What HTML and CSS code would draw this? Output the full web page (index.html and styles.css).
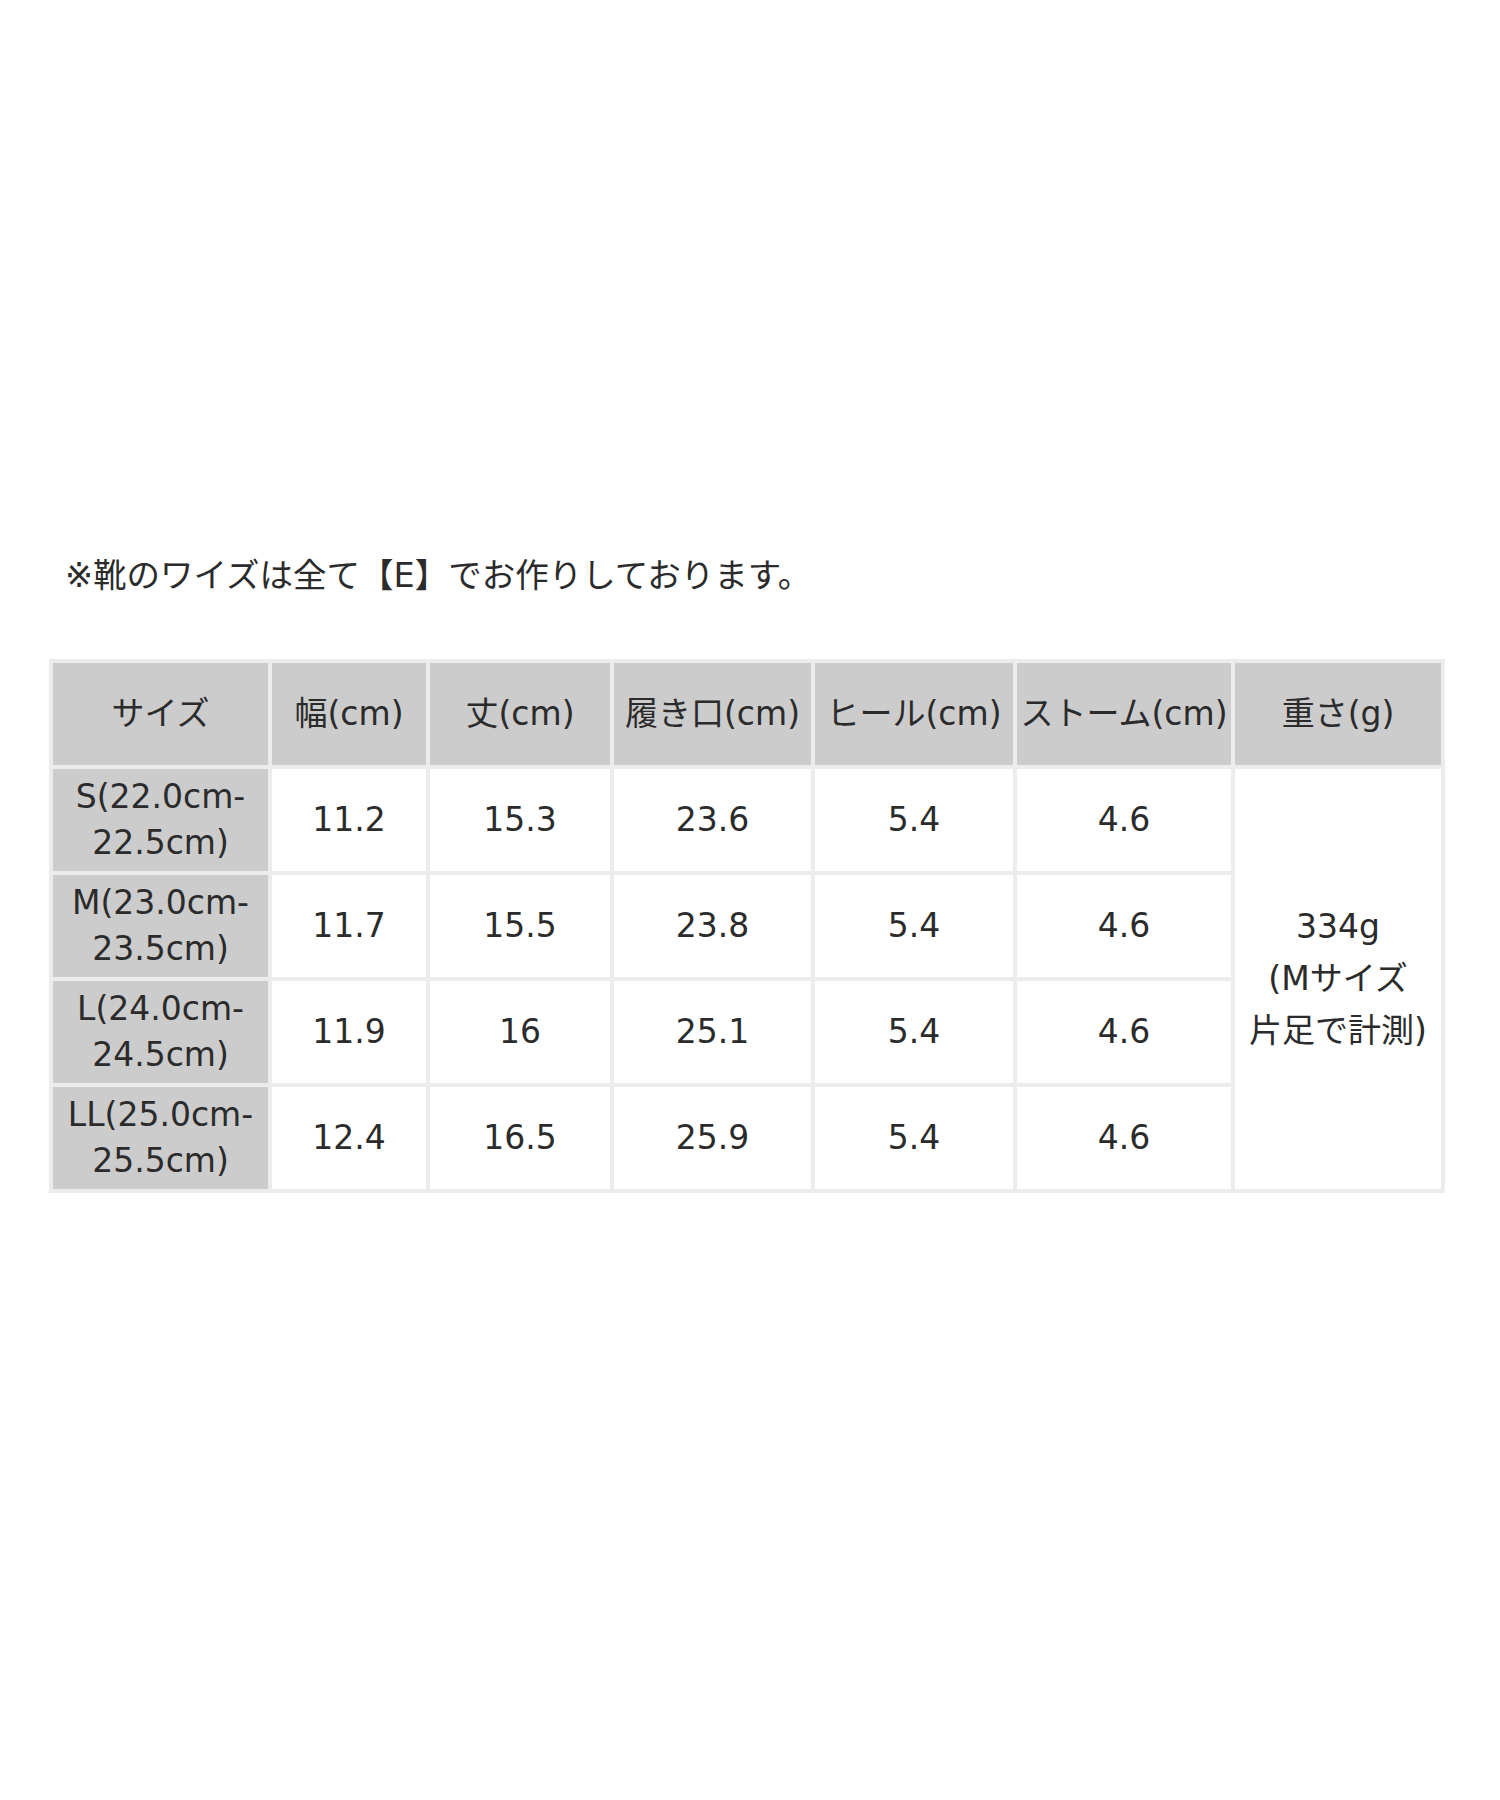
FILE: index.html
```html
<!DOCTYPE html>
<html lang="ja">
<head>
<meta charset="utf-8">
<title>サイズ表</title>
<link rel="stylesheet" href="styles.css">
</head>
<body>
<div class="page">
  <p class="note">※靴のワイズは全て【E】でお作りしております。</p>
  <table class="size-table">
    <colgroup>
      <col class="c-size">
      <col class="c-width">
      <col class="c-length">
      <col class="c-mouth">
      <col class="c-heel">
      <col class="c-storm">
      <col class="c-weight">
    </colgroup>
    <thead>
      <tr>
        <th>サイズ</th>
        <th>幅(cm)</th>
        <th>丈(cm)</th>
        <th>履き口(cm)</th>
        <th>ヒール(cm)</th>
        <th>ストーム(cm)</th>
        <th>重さ(g)</th>
      </tr>
    </thead>
    <tbody>
      <tr>
        <th class="row-head">S(22.0cm-<br>22.5cm)</th>
        <td>11.2</td>
        <td>15.3</td>
        <td>23.6</td>
        <td>5.4</td>
        <td>4.6</td>
        <td class="weight" rowspan="4">334g<br>(Mサイズ<br>片足で計測)</td>
      </tr>
      <tr>
        <th class="row-head">M(23.0cm-<br>23.5cm)</th>
        <td>11.7</td>
        <td>15.5</td>
        <td>23.8</td>
        <td>5.4</td>
        <td>4.6</td>
      </tr>
      <tr>
        <th class="row-head">L(24.0cm-<br>24.5cm)</th>
        <td>11.9</td>
        <td>16</td>
        <td>25.1</td>
        <td>5.4</td>
        <td>4.6</td>
      </tr>
      <tr>
        <th class="row-head">LL(25.0cm-<br>25.5cm)</th>
        <td>12.4</td>
        <td>16.5</td>
        <td>25.9</td>
        <td>5.4</td>
        <td>4.6</td>
      </tr>
    </tbody>
  </table>
</div>
</body>
</html>
```

FILE: styles.css
```css
html, body {
  margin: 0;
  padding: 0;
  background: #ffffff;
}

body {
  font-family: "DejaVu Sans", "Noto Sans CJK JP", sans-serif;
  color: #2b2b2b;
  font-size: 33px;
}

.page {
  padding-top: 553px;
}

.note {
  margin: 0 0 61px 65px;
  font-size: 33.5px;
  line-height: 45px;
  white-space: nowrap;
}

.size-table {
  margin-left: 49px;
  table-layout: fixed;
  width: 1396px;
  border-collapse: separate;
  border-spacing: 4px;
  background: #ececec;
}

.c-size { width: 215px; }
.c-width { width: 154px; }
.c-length { width: 180px; }
.c-mouth { width: 197px; }
.c-heel { width: 198px; }
.c-storm { width: 214px; }
.c-weight { width: 206px; }

.size-table th,
.size-table td {
  padding: 0;
  text-align: center;
  vertical-align: middle;
  font-weight: normal;
  line-height: 46px;
  white-space: nowrap;
}

.size-table thead th {
  height: 102px;
  background: #cccccc;
}

.size-table tbody th,
.size-table tbody td {
  height: 102px;
}

.size-table td {
  background: #ffffff;
}

.size-table .row-head {
  background: #cccccc;
}

.size-table .weight {
  line-height: 52px;
}
```
